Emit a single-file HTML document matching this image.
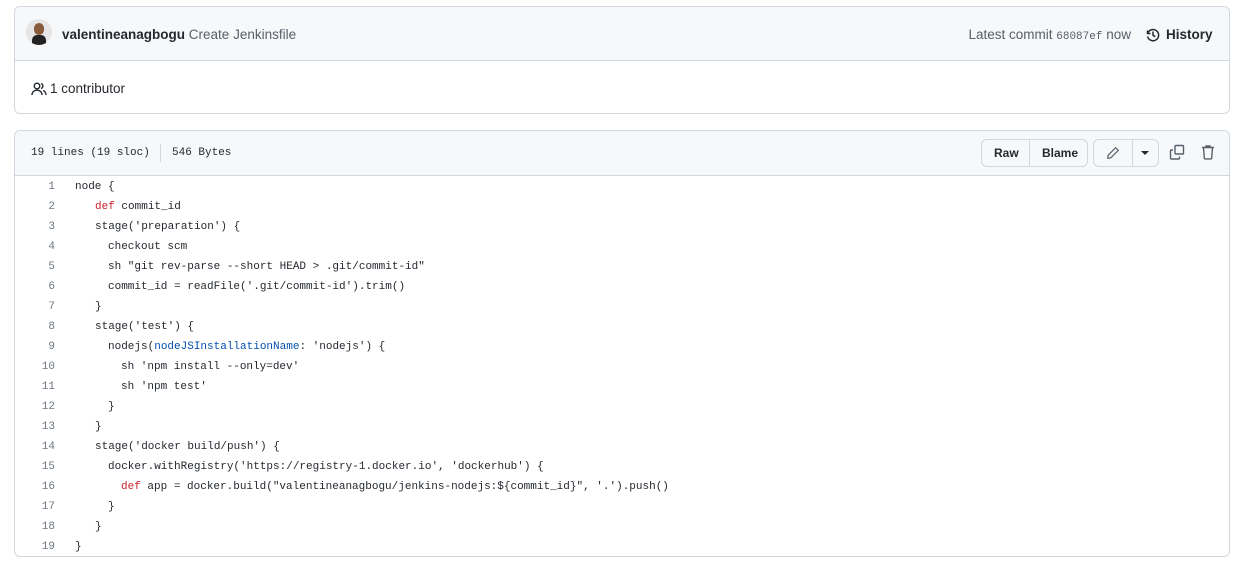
<!DOCTYPE html>
<html><head><meta charset="utf-8"><style>
body{margin:0;background:#fff;font-family:"Liberation Sans",sans-serif;color:#24292f;width:1249px;height:572px;overflow:hidden;position:relative}
.box{position:absolute;left:14px;width:1214px;border:1px solid #d0d7de;border-radius:6px;overflow:hidden}
.hd{background:#f6f8fa;border-bottom:1px solid #d0d7de;position:relative}
.mono{font-family:"Liberation Mono",monospace}
.btn{position:absolute;top:8px;height:28px;border:1px solid #d0d7de;border-radius:6px;background:#f6f8fa;box-sizing:border-box;font-size:12px;font-weight:600;line-height:26px}
.code{position:relative;font-family:"Liberation Mono",monospace;font-size:11px}
.ln{position:absolute;left:0;width:40px;text-align:right;color:#6e7781}
.l{height:20px;line-height:20px;position:relative;white-space:pre}
.c{position:absolute;left:60px}
.k{color:#cf222e}.b{color:#0550ae}
</style></head><body>
<div class="box" style="top:6px;height:106px">
 <div class="hd" style="height:53px">
  <div style="position:absolute;left:11px;top:12px;width:26px;height:26px;border-radius:50%;background:#e6e6e6;overflow:hidden">
   <div style="position:absolute;left:8px;top:4px;width:10px;height:12px;border-radius:5px;background:#8a5a3c"></div>
   <div style="position:absolute;left:6px;top:16px;width:14px;height:12px;border-radius:5px 5px 0 0;background:#222"></div>
  </div>
  <div style="position:absolute;left:47px;top:20px;font-size:13.5px"><b>valentineanagbogu</b> <span style="color:#57606a">Create Jenkinsfile</span></div>
  <div style="position:absolute;right:98px;top:20px;font-size:13.5px;color:#57606a">Latest commit <span class="mono" style="font-size:11px">68087ef</span> now</div>
  <svg style="position:absolute;left:1130px;top:20px" width="16" height="16" viewBox="0 0 16 16" fill="none" stroke="#24292f" stroke-width="1.5"><path d="M2.5 3.5v3h3"/><path d="M2.8 6.2A5.6 5.6 0 1 1 2.6 9.5"/><path d="M8 4.5v3.8l2.3 1.4"/></svg>
  <div style="position:absolute;left:1151px;top:20px;font-size:13.5px;font-weight:bold">History</div>
 </div>
 <svg style="position:absolute;left:16px;top:74px" width="16" height="16" viewBox="0 0 16 16" fill="none" stroke="#24292f" stroke-width="1.4"><circle cx="6" cy="5" r="2.8"/><path d="M1 14c0-3 2.2-4.8 5-4.8s5 1.8 5 4.8"/><path d="M10 2.5a2.6 2.6 0 0 1 0 5M12 9.5c1.8.6 3 2 3 4.5"/></svg>
 <div style="position:absolute;left:35px;top:74px;font-size:13.5px">1 contributor</div>
</div>
<div class="box" style="top:130px;height:425px">
 <div class="hd" style="height:44px">
  <div class="mono" style="position:absolute;left:16px;top:16px;font-size:11px">19 lines (19 sloc)</div>
  <div style="position:absolute;left:145px;top:13px;width:1px;height:18px;background:#d0d7de"></div>
  <div class="mono" style="position:absolute;left:157px;top:16px;font-size:11px">546 Bytes</div>
  <div class="btn" style="left:966px;width:107px"><span style="position:absolute;left:12px">Raw</span><span style="position:absolute;left:47px;top:0;width:1px;height:26px;background:#d0d7de"></span><span style="position:absolute;left:60px">Blame</span></div>
  <div class="btn" style="left:1078px;width:66px">
   <svg style="position:absolute;left:12px;top:6px" width="14" height="14" viewBox="0 0 16 16" fill="none" stroke="#57606a" stroke-width="1.4"><path d="M11 2l3 3-8.5 8.5L2 14l.5-3.5z"/></svg>
   <span style="position:absolute;left:38px;top:0;width:1px;height:26px;background:#d0d7de"></span>
   <span style="position:absolute;left:47px;top:11px;border-left:4px solid transparent;border-right:4px solid transparent;border-top:4px solid #24292f"></span>
  </div>
  <svg style="position:absolute;left:1154px;top:13px" width="16" height="16" viewBox="0 0 16 16" fill="none" stroke="#57606a" stroke-width="1.4"><rect x="6" y="1.5" width="8.5" height="8.5" rx="1"/><path d="M4 6H2.5a1 1 0 0 0-1 1v7a1 1 0 0 0 1 1h7a1 1 0 0 0 1-1v-1.5"/></svg>
  <svg style="position:absolute;left:1185px;top:13px" width="16" height="16" viewBox="0 0 16 16" fill="none" stroke="#57606a" stroke-width="1.4"><path d="M2 3.5h12M6 3.5V2h4v1.5M3.5 3.5l.8 10.5a1 1 0 0 0 1 .9h5.4a1 1 0 0 0 1-.9l.8-10.5"/></svg>
 </div>
 <div class="code" style="padding-top:1px">
<div class="l"><span class="ln">1</span><span class="c">node {</span></div>
<div class="l"><span class="ln">2</span><span class="c" style="left:80px"><span class="k">def</span> commit_id</span></div>
<div class="l"><span class="ln">3</span><span class="c" style="left:80px">stage('preparation') {</span></div>
<div class="l"><span class="ln">4</span><span class="c" style="left:93px">checkout scm</span></div>
<div class="l"><span class="ln">5</span><span class="c" style="left:93px">sh "git rev-parse --short HEAD &gt; .git/commit-id"</span></div>
<div class="l"><span class="ln">6</span><span class="c" style="left:93px">commit_id = readFile('.git/commit-id').trim()</span></div>
<div class="l"><span class="ln">7</span><span class="c" style="left:80px">}</span></div>
<div class="l"><span class="ln">8</span><span class="c" style="left:80px">stage('test') {</span></div>
<div class="l"><span class="ln">9</span><span class="c" style="left:93px">nodejs(<span class="b">nodeJSInstallationName</span>: 'nodejs') {</span></div>
<div class="l"><span class="ln">10</span><span class="c" style="left:106px">sh 'npm install --only=dev'</span></div>
<div class="l"><span class="ln">11</span><span class="c" style="left:106px">sh 'npm test'</span></div>
<div class="l"><span class="ln">12</span><span class="c" style="left:93px">}</span></div>
<div class="l"><span class="ln">13</span><span class="c" style="left:80px">}</span></div>
<div class="l"><span class="ln">14</span><span class="c" style="left:80px">stage('docker build/push') {</span></div>
<div class="l"><span class="ln">15</span><span class="c" style="left:93px">docker.withRegistry('https://registry-1.docker.io', 'dockerhub') {</span></div>
<div class="l"><span class="ln">16</span><span class="c" style="left:106px"><span class="k">def</span> app = docker.build("valentineanagbogu/jenkins-nodejs:${commit_id}", '.').push()</span></div>
<div class="l"><span class="ln">17</span><span class="c" style="left:93px">}</span></div>
<div class="l"><span class="ln">18</span><span class="c" style="left:80px">}</span></div>
<div class="l"><span class="ln">19</span><span class="c">}</span></div>
 </div>
</div>
</body></html>
